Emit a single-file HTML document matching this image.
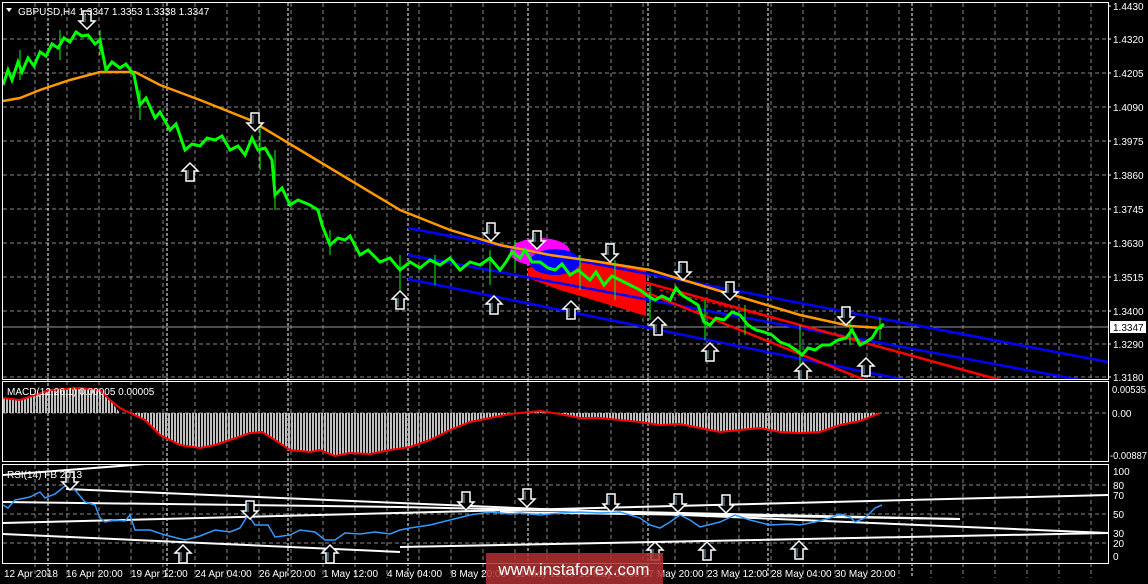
<!DOCTYPE html>
<html><head><meta charset="utf-8"><style>
html,body{margin:0;padding:0;background:#000;width:1148px;height:584px;overflow:hidden}
svg{display:block}
text{font-family:"Liberation Sans",sans-serif;fill:#fff;font-size:10px}
</style></head><body>
<svg width="1148" height="584" viewBox="0 0 1148 584" xmlns="http://www.w3.org/2000/svg">
<defs>
<pattern id="hist" width="3" height="10" patternUnits="userSpaceOnUse"><rect width="2" height="10" fill="#c0c0c0"/></pattern>
<g id="dn"><path d="M-4,-9 H4 V1 H8 L0,9 L-8,1 H-4 Z" fill="#000" stroke="#fff" stroke-width="1.5"/><path d="M-2,-7 V2" stroke="#7ab" stroke-width="1"/></g>
<g id="up"><path d="M-4,9 H4 V-1 H8 L0,-9 L-8,-1 H-4 Z" fill="#000" stroke="#fff" stroke-width="1.5"/><path d="M-2,7 V-2" stroke="#7ab" stroke-width="1"/></g>
<clipPath id="cm"><rect x="3" y="3" width="1105" height="376"/></clipPath>
<clipPath id="cr"><rect x="3" y="465" width="1105" height="98"/></clipPath>
</defs>
<g stroke="#888" stroke-dasharray="4,3" stroke-width="1">
<path d="M3,39H1108M3,73H1108M3,107H1108M3,141H1108M3,175H1108M3,209H1108M3,243H1108M3,277H1108M3,311H1108M3,344H1108M3,377H1108"/>
<path d="M3,413H1108M3,485H1108M3,514H1108M3,543H1108"/>
<path d="M35,3V578M67,3V578M99,3V578M131,3V578M163,3V578M195,3V578M227,3V578M259,3V578M291,3V578M323,3V578M355,3V578M387,3V578M419,3V578M451,3V578M483,3V578M515,3V578M547,3V578M579,3V578M611,3V578M643,3V578M675,3V578M707,3V578M739,3V578M771,3V578M803,3V578M835,3V578M867,3V578M899,3V578M931,3V578M963,3V578M995,3V578M1027,3V578M1059,3V578M1091,3V578"/>
</g>
<g stroke="#fff" stroke-dasharray="3,2" stroke-width="1">
<path d="M48,3V578M167,3V578M288,3V578M408,3V578M528,3V578M648,3V578M768,3V578M912,3V578"/>
</g>
<path d="M3,327H1108" stroke="#999" stroke-width="1"/>
<g clip-path="url(#cm)">
<ellipse cx="540" cy="252" rx="30" ry="14" fill="#f0f"/>
<path d="M528,268 L560,258 L600,262 L646,268 L646,316 L600,302 L560,290 L528,278Z" fill="#f00"/>
<ellipse cx="555" cy="262" rx="25" ry="13" fill="#00f"/>
<path d="M408,228 L1108,362" stroke="#00f" stroke-width="2.5"/>
<path d="M408,255 L1080,380" stroke="#00f" stroke-width="2.5"/>
<path d="M408,279 L905,380" stroke="#00f" stroke-width="2.5"/>
<path d="M600,270 L1000,380" stroke="#f00" stroke-width="2.5"/>
<path d="M640,290 L865,380" stroke="#f00" stroke-width="2.5"/>
<path d="M660,290 L860,340" stroke="#f00" stroke-width="1.5" stroke-dasharray="3,3"/>
<polyline fill="none" stroke="#f90" stroke-width="2.5" points="3,101 20,98 40,90 70,80 100,72 135,72 160,85 200,100 250,120 300,150 350,180 400,210 450,230 500,245 550,255 600,262 650,270 700,285 750,300 800,315 850,326 882,328"/>
<polyline fill="none" stroke="#0f0" stroke-width="3" points="3,85 8,70 12,80 18,62 22,72 28,58 34,66 40,52 46,56 52,44 58,48 64,38 70,42 76,32 82,36 88,35 95,44 100,40 106,70 112,62 120,68 126,64 134,75 140,105 146,98 155,118 160,112 170,130 176,124 185,150 192,144 200,146 207,138 215,140 222,136 230,150 238,146 245,155 252,138 258,150 265,148 272,160 275,195 282,188 290,205 298,200 310,205 318,210 322,225 330,245 338,238 345,240 350,236 360,255 368,250 380,262 390,258 400,270 410,262 420,268 430,260 440,265 450,258 460,270 470,262 480,265 490,258 500,270 506,262 512,252 520,258 525,250 532,262 540,262 548,268 555,270 562,264 570,275 578,270 590,280 596,272 604,285 612,276 620,280 630,285 640,290 648,296 655,300 662,296 670,300 676,288 682,295 690,300 698,305 704,322 710,325 716,318 724,320 732,312 740,315 748,325 756,330 764,332 772,335 780,342 788,345 796,350 802,355 808,348 815,350 822,345 830,345 838,340 846,338 852,330 860,345 866,342 872,338 878,328 884,324"/>
<g stroke="#0f0" stroke-width="1">
<path d="M20,50V80M60,30V60M100,30V55M140,90V120M260,125V170M275,150V210M330,230V255M400,255V290M435,255V285M490,250V285M515,240V270M580,255V290M615,260V300M650,285V320M705,300V340M745,305V335M800,325V365M850,318V345M880,318V340"/>
</g>
<use href="#dn" x="87" y="20"/><use href="#dn" x="255" y="122"/><use href="#dn" x="491" y="232"/><use href="#dn" x="537" y="240"/><use href="#dn" x="610" y="253"/><use href="#dn" x="683" y="271"/><use href="#dn" x="730" y="291"/><use href="#dn" x="846" y="316"/>
<use href="#up" x="190" y="172"/><use href="#up" x="400" y="300"/><use href="#up" x="494" y="305"/><use href="#up" x="571" y="310"/><use href="#up" x="658" y="326"/><use href="#up" x="710" y="352"/><use href="#up" x="803" y="372"/><use href="#up" x="866" y="367"/>
</g>
<polygon fill="url(#hist)" points="3,398 20,400 50,390 80,388 100,390 110,400 120,413 3,413"/>
<polygon fill="url(#hist)" points="120,413 130,413 145,420 160,435 180,445 200,448 215,445 230,440 250,433 262,432 275,440 290,450 310,452 320,450 335,456 350,453 370,454 390,450 410,447 430,440 450,430 470,422 490,418 510,414 540,411 560,414 580,418 600,418 620,420 640,422 660,425 680,424 700,428 720,432 740,430 760,428 780,432 800,433 820,432 840,425 860,421 880,413"/>
<polyline fill="none" stroke="#f00" stroke-width="2" points="3,398 20,400 50,390 80,388 100,390 110,400 120,408 130,413 145,420 160,435 180,445 200,448 215,445 230,440 250,433 262,432 275,440 290,450 310,452 320,450 335,456 350,453 370,454 390,450 410,447 430,440 450,430 470,422 490,418 510,414 540,411 560,414 580,418 600,418 620,420 640,422 660,425 680,424 700,428 720,432 740,430 760,428 780,432 800,433 820,432 840,425 860,421 880,413"/>
<g clip-path="url(#cr)" fill="none">
<g stroke="#fff" stroke-width="2">
<path d="M3,475 L145,464"/>
<path d="M3,502 L400,507 L960,519"/>
<path d="M66,489 L400,503 L1108,533"/>
<path d="M3,523 L1108,495"/>
<path d="M3,534 L400,552"/>
<path d="M400,547 L1108,533"/>
<path d="M500,512 L960,519"/>
</g>
<polyline stroke="#39f" stroke-width="1.5" points="3,505 8,508 15,500 30,497 40,492 45,498 55,494 65,486 75,490 85,502 95,505 100,518 105,522 115,520 125,521 130,515 135,530 150,530 165,535 185,540 200,536 215,530 230,532 240,528 248,515 255,525 268,525 275,537 290,535 300,530 315,532 325,540 335,540 345,533 360,534 375,532 390,534 400,530 410,528 430,525 450,520 470,515 490,512 510,514 520,513 540,515 560,513 580,512 600,513 620,512 640,518 650,525 660,528 670,522 680,515 690,520 700,527 720,522 735,515 750,520 770,525 790,524 800,525 815,522 830,518 840,514 850,517 855,522 865,518 875,508 882,505"/>
<use href="#dn" x="70" y="481"/><use href="#dn" x="250" y="510"/><use href="#dn" x="466" y="501"/><use href="#dn" x="527" y="498"/><use href="#dn" x="611" y="503"/><use href="#dn" x="678" y="503"/><use href="#dn" x="726" y="504"/>
<use href="#up" x="183" y="554"/><use href="#up" x="330" y="554"/><use href="#up" x="655" y="551"/><use href="#up" x="707" y="551"/><use href="#up" x="799" y="550"/>
</g>
<g fill="none" stroke="#fff" stroke-width="1">
<rect x="2.5" y="2.5" width="1106" height="377"/>
<rect x="2.5" y="381.5" width="1106" height="80"/>
<rect x="2.5" y="464.5" width="1106" height="99"/>
</g>
<path d="M6,8 L12,8 L9,12Z" fill="#fff"/>
<text x="18" y="15">GBPUSD,H4  1.3347 1.3353 1.3338 1.3347</text>
<text x="7" y="395">MACD(12,26,1) 0.00005 0.00005</text>
<text x="7" y="478">RSI(14) FB 2013</text>
<g stroke="#fff"><path d="M1108,6h3M1108,39h3M1108,73h3M1108,107h3M1108,141h3M1108,175h3M1108,209h3M1108,243h3M1108,277h3M1108,311h3M1108,344h3M1108,377h3"/></g>
<text x="1113" y="10">1.4430</text><text x="1113" y="43">1.4320</text><text x="1113" y="77">1.4205</text><text x="1113" y="111">1.4090</text><text x="1113" y="145">1.3975</text><text x="1113" y="179">1.3860</text><text x="1113" y="213">1.3745</text><text x="1113" y="247">1.3630</text><text x="1113" y="281">1.3515</text><text x="1113" y="315">1.3400</text><text x="1113" y="348">1.3290</text><text x="1113" y="381">1.3180</text>
<rect x="1110" y="321" width="36" height="12" fill="#fff"/>
<text x="1113" y="331" style="fill:#000">1.3347</text>
<text x="1112" y="393" textLength="34" lengthAdjust="spacingAndGlyphs">0.00535</text><text x="1112" y="417">0.00</text><text x="1110" y="459" textLength="37" lengthAdjust="spacingAndGlyphs">-0.00887</text>
<text x="1113" y="475">100</text><text x="1113" y="489">80</text><text x="1113" y="499">70</text><text x="1113" y="518">50</text><text x="1113" y="537">30</text><text x="1113" y="547">20</text><text x="1113" y="560">0</text>
<g style="font-size:9.5px">
<text x="4" y="577">12 Apr 2018</text><text x="66" y="577">16 Apr 20:00</text><text x="131" y="577">19 Apr 12:00</text><text x="195" y="577">24 Apr 04:00</text><text x="259" y="577">26 Apr 20:00</text><text x="323" y="577">1 May 12:00</text><text x="387" y="577">4 May 04:00</text><text x="451" y="577">8 May 20:00</text><text x="515" y="577">11 May 12:00</text><text x="579" y="577">15 May 04:00</text><text x="643" y="577">17 May 20:00</text><text x="707" y="577">23 May 12:00</text><text x="771" y="577">28 May 04:00</text><text x="835" y="577">30 May 20:00</text>
</g>
<rect x="486" y="553" width="177" height="31" fill="#b03030" fill-opacity="0.85"/>
<text x="574" y="575" text-anchor="middle" style="font-size:17px;fill:#fff">www.instaforex.com</text>
</svg>
</body></html>
